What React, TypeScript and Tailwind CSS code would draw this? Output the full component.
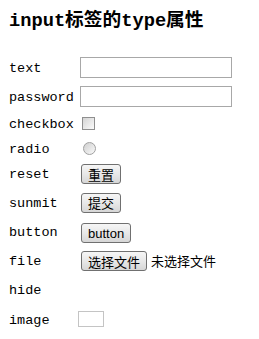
const mono = { fontFamily: '"Liberation Mono", "Noto Sans CJK SC", monospace' };

function Btn({ children, latin }: { children: React.ReactNode; latin?: boolean }) {
  return (
    <button
      className={
        "h-[20px] rounded-[3px] border border-[#707070] bg-gradient-to-b from-[#f6f6f6] via-[#e8e8e8] to-[#d6d6d6] px-[6px] text-[13px] leading-none text-black " +
        (latin ? "font-['Liberation_Sans',sans-serif]" : "font-['Noto_Sans_CJK_SC',sans-serif]")
      }
    >
      {children}
    </button>
  );
}

function Row({ label, h, children }: { label: string; h: string; children?: React.ReactNode }) {
  return (
    <div className={"flex items-center " + h}>
      <div className="w-[69px] pt-[3px] text-[13.5px] leading-none" style={mono}>
        {label}
      </div>
      <div className="flex items-center">{children}</div>
    </div>
  );
}

export default function App() {
  return (
    <div className="w-[259px] h-[339px] bg-white pl-[9px] text-black overflow-hidden">
      <div className="h-[52px] pt-[12px] text-[18.72px] font-bold leading-none" style={mono}>
        input标签的type属性
      </div>

      <Row label="text" h="h-[30px]">
        <input type="text" className="ml-[2px] w-[152px] h-[21px] border border-[#a8a8a8] bg-white" />
      </Row>
      <Row label="password" h="h-[29px]">
        <input type="password" className="ml-[2px] w-[152px] h-[21px] border border-[#a8a8a8] bg-white" />
      </Row>
      <Row label="checkbox" h="h-[25px]">
        <span className="ml-[4px] block w-[13px] h-[13px] border border-[#8f8f8f] bg-gradient-to-br from-[#d4d4d4] to-[#fbfbfb]" />
      </Row>
      <Row label="radio" h="h-[24px]">
        <span className="ml-[5px] block w-[13px] h-[13px] rounded-full border border-[#a0a0a0] bg-gradient-to-br from-[#cfcfcf] to-[#fafafa]" />
      </Row>
      <Row label="reset" h="h-[27px]">
        <span className="ml-[3px]">
          <Btn>重置</Btn>
        </span>
      </Row>
      <Row label="sunmit" h="h-[30px]">
        <span className="ml-[3px]">
          <Btn>提交</Btn>
        </span>
      </Row>
      <Row label="button" h="h-[29px]">
        <span className="ml-[3px]">
          <Btn latin>button</Btn>
        </span>
      </Row>
      <Row label="file" h="h-[29px]">
        <span className="ml-[3px]">
          <Btn>选择文件</Btn>
        </span>
        <span className="ml-[4px] text-[13px] font-['Noto_Sans_CJK_SC',sans-serif]">未选择文件</span>
      </Row>
      <Row label="hide" h="h-[29px]" />
      <Row label="image" h="h-[30px]">
        <span className="block w-[26px] h-[16px] border border-[#c4c4c4]" />
      </Row>
    </div>
  );
}
